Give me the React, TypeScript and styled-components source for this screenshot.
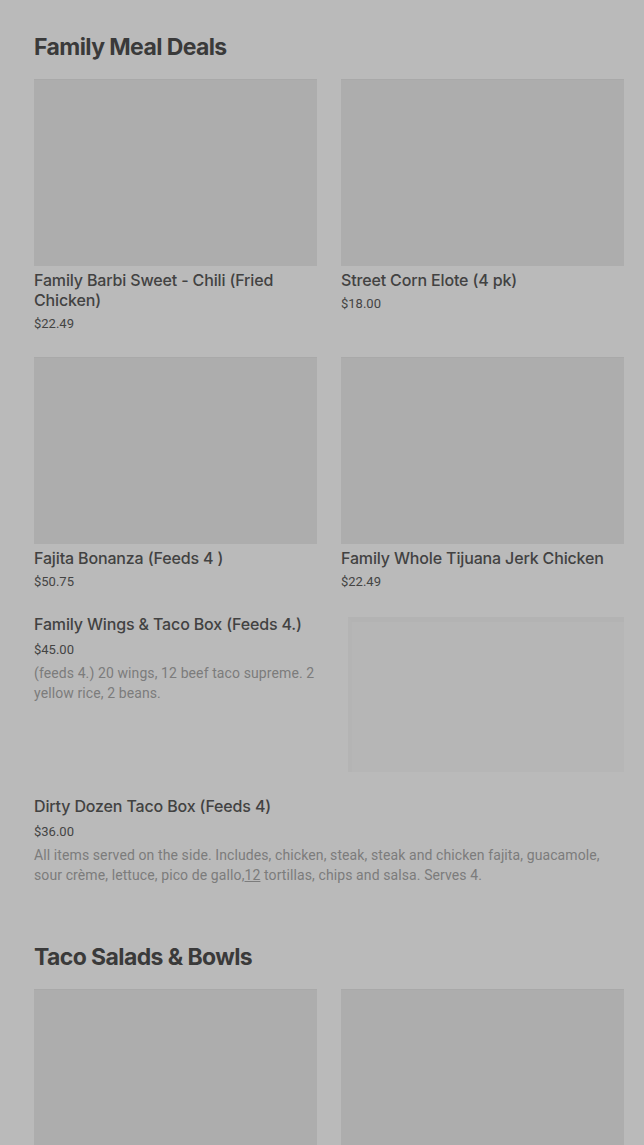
import styled, { createGlobalStyle } from "styled-components"

const GlobalStyle = createGlobalStyle`
    html, body {
        margin: 0;
        padding: 0;
        background: #bababa;
    }
    * {
        box-sizing: border-box;
    }
`

type Item = {
    name: string
    price: string
}

const familyGrid: Item[] = [
    { name: "Family Barbi Sweet - Chili (Fried Chicken)", price: "$22.49" },
    { name: "Street Corn Elote (4 pk)", price: "$18.00" },
    { name: "Fajita Bonanza (Feeds 4 )", price: "$50.75" },
    { name: "Family Whole Tijuana Jerk Chicken", price: "$22.49" },
]

function App() {
    return (
        <>
            <GlobalStyle />
            <Page>
                <Section>
                    <SectionTitle>Family Meal Deals</SectionTitle>
                    <Grid>
                        {familyGrid.map((v) => (
                            <Card key={v.name}>
                                <Thumb />
                                <ItemName>{v.name}</ItemName>
                                <Price>{v.price}</Price>
                            </Card>
                        ))}
                    </Grid>

                    <Row>
                        <RowText>
                            <ItemName>Family Wings &amp; Taco Box (Feeds 4.)</ItemName>
                            <RowPrice>$45.00</RowPrice>
                            <Desc>
                                (feeds 4.) 20 wings, 12 beef taco supreme. 2 yellow
                                rice, 2 beans.
                            </Desc>
                        </RowText>
                        <RowThumb />
                    </Row>

                    <Row>
                        <RowText>
                            <ItemName>Dirty Dozen Taco Box (Feeds 4)</ItemName>
                            <RowPrice>$36.00</RowPrice>
                            <Desc>
                                All items served on the side. Includes, chicken, steak,
                                steak and chicken fajita, guacamole, sour crème, lettuce,
                                pico de gallo,<Linked>12</Linked> tortillas, chips and salsa.
                                Serves 4.
                            </Desc>
                        </RowText>
                    </Row>
                </Section>

                <Section>
                    <SectionTitle>Taco Salads &amp; Bowls</SectionTitle>
                    <Grid>
                        <Card>
                            <Thumb />
                        </Card>
                        <Card>
                            <Thumb />
                        </Card>
                    </Grid>
                </Section>
            </Page>
        </>
    )
}

export default App

const Page = styled.div`
    width: 100%;
    min-height: 100vh;
    padding: 33px 20px 0 34px;
    background: #bababa;
    font-family: Roboto, "Liberation Sans", sans-serif;
    color: #3c3c3c;
    display: flex;
    flex-direction: column;
    gap: 37px;
`

const Section = styled.div`
    display: flex;
    flex-direction: column;
`

const SectionTitle = styled.h2`
    margin: 0 0 18px;
    font-family: Inter, "Liberation Sans", sans-serif;
    font-size: 23px;
    line-height: 28px;
    font-weight: 700;
    letter-spacing: -0.6px;
    color: #3a3a3a;
`

const Grid = styled.div`
    display: grid;
    grid-template-columns: 1fr 1fr;
    column-gap: 24px;
    row-gap: 24px;
    margin-bottom: 20px;
`

const Card = styled.div`
    display: flex;
    flex-direction: column;
`

const Thumb = styled.div`
    width: 100%;
    height: 187px;
    background: #adadad;
    border-top: 1px solid #a9a9a9;
    margin-bottom: 4px;
`

const ItemName = styled.div`
    font-family: Inter, Roboto, "Liberation Sans", sans-serif;
    font-size: 16px;
    line-height: 20px;
    font-weight: 500;
    letter-spacing: -0.15px;
    color: #424242;
`

const Price = styled.div`
    margin-top: 5px;
    font-size: 13px;
    line-height: 18px;
    color: #444444;
`

const Row = styled.div`
    display: flex;
    gap: 30px;
    margin-bottom: 21px;
`

const RowText = styled.div`
    flex: 1;
    padding-top: 3px;
    display: flex;
    flex-direction: column;
`

const RowPrice = styled(Price)`
    margin-top: 7px;
    margin-bottom: 4px;
`

const Desc = styled.div`
    font-size: 14px;
    line-height: 20px;
    letter-spacing: 0.1px;
    color: #7c7c7c;
`

const Linked = styled.span`
    text-decoration: underline;
    text-decoration-color: #7c7c7c;
`

const RowThumb = styled.div`
    width: 276px;
    height: 155px;
    margin-top: 6px;
    flex-shrink: 0;
    background: #b6b6b6;
    border-top: 5px solid #b3b3b3;
    border-left: 4px solid #b4b4b4;
`
